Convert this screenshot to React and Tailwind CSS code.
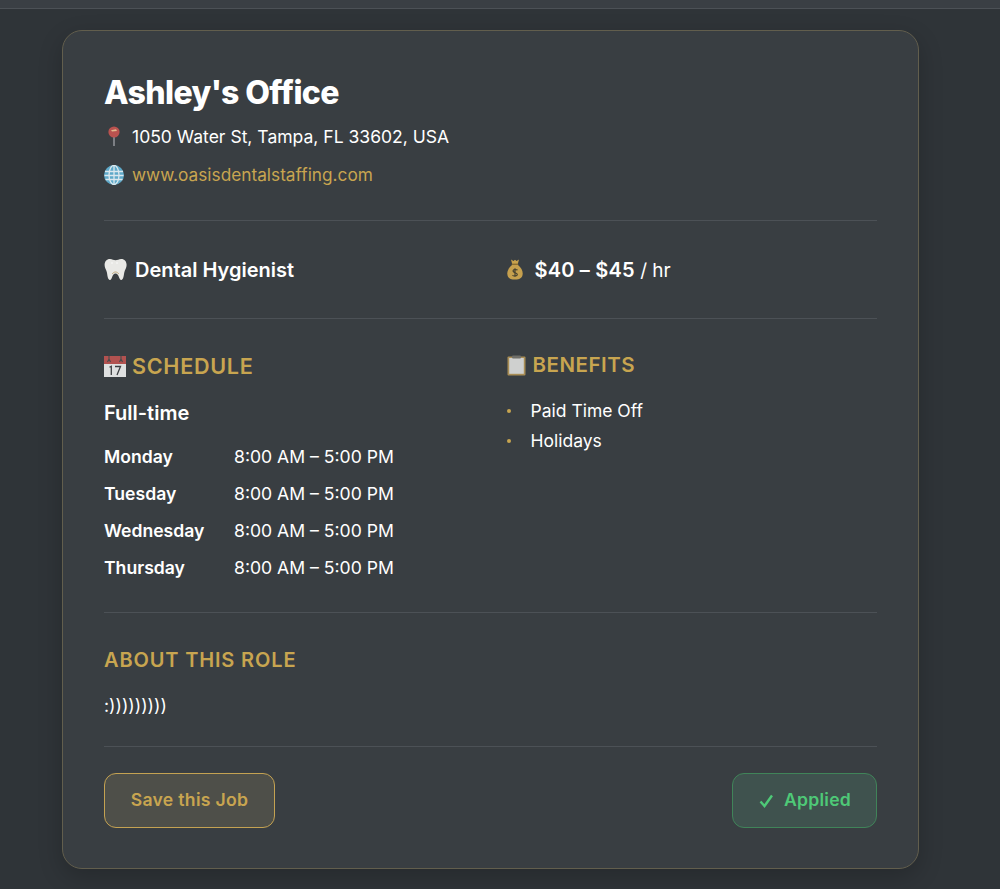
const Pin = () => (
  <svg width="20" height="22" viewBox="0 0 20 22" className="shrink-0">
    <rect x="9.2" y="9" width="1.6" height="11" fill="#8d9094" />
    <circle cx="10" cy="6" r="5.6" fill="#b9524f" />
    <path d="M7 4.2 L12 3.2 L13 5 L8 5.6Z" fill="#e3b98d" />
  </svg>
);
const Globe = () => (
  <svg width="20" height="20" viewBox="0 0 20 20" className="shrink-0">
    <circle cx="10" cy="10" r="10" fill="#5ea9c9" />
    <g stroke="#dbe8ee" strokeWidth="1.3" fill="none">
      <ellipse cx="10" cy="10" rx="5" ry="9.6" />
      <path d="M10 0.5V19.5M1 6.5H19M0.5 10.5H19.5M1.5 14.5H18.5" />
    </g>
  </svg>
);
const Tooth = () => (
  <svg width="23" height="23" viewBox="0 0 23 23" className="shrink-0">
    <path d="M6 1C2.6 1 .6 3.6.6 7c0 3 1.6 4.6 2.2 7 .6 2.6.8 8 3.2 8 2.2 0 2-6.600 5.500-6.600S15 22 17.200 22c2.400 0 2.600-5.400 3.200-8 .6-2.400 2.200-4 2.200-7 0-3.400-2-6-5.400-6-2.400 0-3.600 1.300-5.700 1.300S8.400 1 6 1Z" fill="#e9e9e6" />
    <path d="M8 16c1-1 2-2 3.500-2s2.500 1 3.500 2" stroke="#bfa678" strokeWidth="1" fill="none" />
    <circle cx="8" cy="5" r=".7" fill="#fff" /><circle cx="13" cy="5" r=".7" fill="#fff" />
  </svg>
);
const Bag = () => (
  <svg width="16" height="21" viewBox="0 0 16 21" className="shrink-0">
    <path d="M4 0.500 L6.500 2 L8 .8 L9.500 2 L12 .5 L10.800 5H5.200Z" fill="#c9a24c" />
    <rect x="4.800" y="4.600" width="6.400" height="1.600" fill="#8b6d31" />
    <path d="M5 6C2 8.500.3 11.500.3 14.500.3 18.800 3 20.500 8 20.500s7.700-1.700 7.700-6C15.700 11.500 14 8.500 11 6Z" fill="#c6a04e" />
    <path d="M10.500 11.200C9.800 10.300 6 10 6 12.100c0 2.100 4.300 1.300 4.300 3.400 0 2-4 1.800-4.800.7M8 9.300v8.500" stroke="#3d3a2e" strokeWidth="1.100" fill="none" />
  </svg>
);
const Calendar = () => (
  <svg width="22" height="22" viewBox="0 0 22 22" className="shrink-0">
    <rect x="0" y="1" width="22" height="21" fill="#dfe0e0" />
    <rect x="0" y="1" width="22" height="8" fill="#b25250" />
    <path d="M5 1v5M17 1v5M3.500 7l1.500-3 1.500 3M15.500 7l1.500-3 1.500 3" stroke="#4a4b4d" strokeWidth="1.100" fill="none" />
    <path d="M5.500 12.300l1.800-1V20M11 11.500h5.500L13 20" stroke="#3d3f42" strokeWidth="1.300" fill="none" />
  </svg>
);
const Clipboard = () => (
  <svg width="19" height="21" viewBox="0 0 19 21" className="shrink-0">
    <rect x="0.500" y="1.500" width="18" height="19" rx="1" fill="#a98d55" />
    <rect x="2.200" y="3" width="14.600" height="15.800" fill="#cfd0cf" />
    <rect x="5" y="0.500" width="9" height="3" rx="1" fill="#6f6e69" />
  </svg>
);

const Divider = () => <div className="h-px bg-[#4c5156]" />;

const hours = [
  ["Monday", "8:00 AM – 5:00 PM"],
  ["Tuesday", "8:00 AM – 5:00 PM"],
  ["Wednesday", "8:00 AM – 5:00 PM"],
  ["Thursday", "8:00 AM – 5:00 PM"],
];

export default function App() {
  return (
    <div className="min-h-[889px] bg-[#2f3438] text-white font-['Inter',sans-serif] overflow-hidden">
      <div className="h-[9px] bg-[#3a3f44] border-b border-[#4c5156]" />
      <div className="pt-[21px] pl-[62px]">
        <div className="w-[857px] h-[839px] box-border rounded-[20px] border border-[#625e4d] bg-[#393e42] px-[41px] pt-[42px] shadow-[0_8px_24px_rgba(0,0,0,0.2)]">
          <h1 className="text-[32px] leading-[40px] font-extrabold tracking-[-0.6px]">Ashley's Office</h1>
          <div className="mt-[11px] flex items-center gap-[8px] text-[17.55px] leading-[26px]">
            <Pin />
            <span>1050 Water St, Tampa, FL 33602, USA</span>
          </div>
          <div className="mt-[12px] flex items-center gap-[8px] text-[17.25px] leading-[26px] text-[#c8a550]">
            <Globe />
            <span>www.oasisdentalstaffing.com</span>
          </div>
          <div className="mt-[32px]"><Divider /></div>

          <div className="grid grid-cols-2 gap-8 pt-[35px] pb-[35px]">
            <div className="flex items-center gap-[8px] h-[27px] text-[20px] font-semibold">
              <Tooth />
              <span>Dental Hygienist</span>
            </div>
            <div className="flex items-center gap-[12px] h-[27px] text-[19px]">
              <Bag />
              <span className="pt-[2px]"><span className="font-semibold text-[20px] tracking-[0.2px]">$40 – $45</span> / hr</span>
            </div>
          </div>
          <Divider />

          <div className="grid grid-cols-2 gap-8 pt-[33px]">
            <div>
              <div className="flex items-center gap-[6px] h-[28px] text-[21.6px] font-semibold tracking-[0.7px] text-[#c8a550]">
                <Calendar />
                <span>SCHEDULE</span>
              </div>
              <div className="mt-[19px] text-[20px] leading-[28px] font-semibold">Full-time</div>
              <div className="mt-[17px] flex flex-col gap-[11px]">
                {hours.map(([d, t]) => (
                  <div key={d} className="flex text-[17.6px] leading-[26px]">
                    <span className="w-[130px] font-semibold">{d}</span>
                    <span>{t}</span>
                  </div>
                ))}
              </div>
            </div>
            <div>
              <div className="flex items-center gap-[7px] h-[27px] text-[20.5px] font-semibold tracking-[0.5px] text-[#c8a550]">
                <Clipboard />
                <span>BENEFITS</span>
              </div>
              <ul className="mt-[19px] flex flex-col gap-[4px]">
                {["Paid Time Off", "Holidays"].map((b) => (
                  <li key={b} className="flex items-center text-[17.5px] leading-[26px]">
                    <span className="w-[4px] h-[4px] rounded-full bg-[#c8a550] mr-[20px]" />
                    {b}
                  </li>
                ))}
              </ul>
            </div>
          </div>

          <div className="mt-[31px]"><Divider /></div>

          <h2 className="mt-[33px] text-[20px] leading-[28px] font-semibold tracking-[0.85px] text-[#c8a550]">ABOUT THIS ROLE</h2>
          <p className="mt-[19px] text-[17.6px] leading-[26px]">:)))))))))</p>
          <div className="mt-[27px]"><Divider /></div>

          <div className="mt-[26px] flex items-center justify-between">
            <button className="w-[171px] h-[55px] rounded-[12px] border border-[#c4a252] bg-[#4e4f49] text-[17.6px] tracking-[0.3px] font-semibold text-[#c8a550]">
              Save this Job
            </button>
            <div className="flex items-center justify-center gap-[10px] w-[145px] h-[55px] pl-[1px] rounded-[12px] border border-[#408459] bg-[#3f524e] text-[17.6px] tracking-[0.25px] font-semibold text-[#4ec977]">
              <svg width="15" height="14" viewBox="0 0 15 14" fill="none" stroke="#4ec977" strokeWidth="2.400"><path d="M1.500 7.500 L5.500 12 L13 1.500" /></svg>
              <span>Applied</span>
            </div>
          </div>
        </div>
      </div>
    </div>
  );
}
